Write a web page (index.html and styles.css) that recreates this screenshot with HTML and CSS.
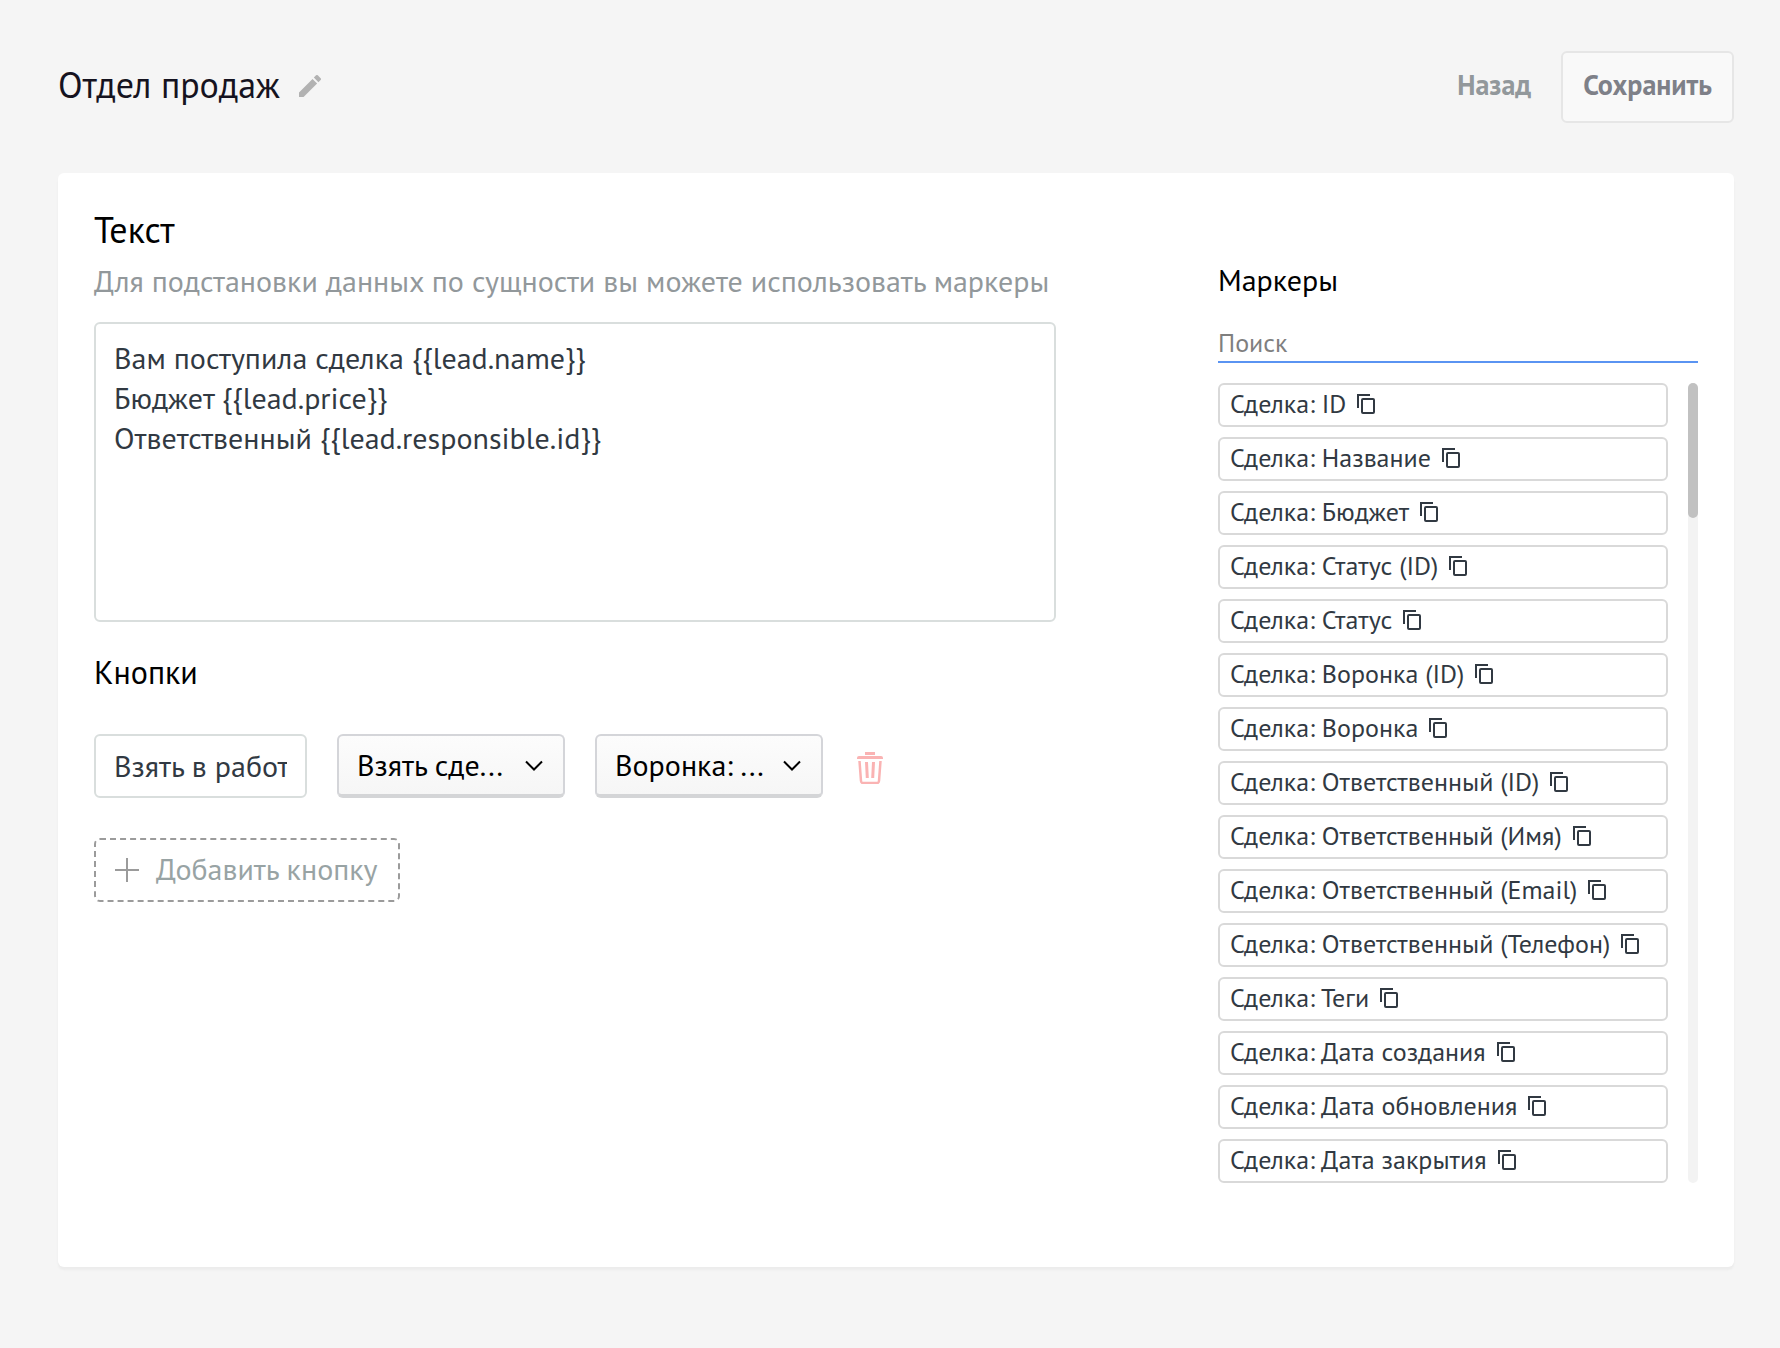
FILE: index.html
```html
<!DOCTYPE html>
<html lang="ru">
<head>
<meta charset="utf-8">
<meta name="viewport" content="width=device-width, initial-scale=1">
<title>Отдел продаж</title>
<link rel="stylesheet" href="styles.css">
</head>
<body>
<svg class="sprite" aria-hidden="true">
  <symbol id="icon-copy" viewBox="0 0 18 20">
    <path d="M1 14V1H13" fill="none" stroke="currentColor" stroke-width="2"/>
    <rect x="5" y="5" width="12" height="14" rx="1" fill="none" stroke="currentColor" stroke-width="2"/>
  </symbol>
  <symbol id="icon-chevron" viewBox="0 0 18 11">
    <path d="M1 1.5 9 9.500 17 1.500" fill="none" stroke="currentColor" stroke-width="2"/>
  </symbol>
</svg>

<header class="header">
  <h1 class="title">Отдел продаж</h1>
  <button class="icon-button" type="button" aria-label="Переименовать">
    <svg class="icon-pencil" viewBox="3 3 18 18"><path d="M3 17.250V21h3.750L17.810 9.940l-3.750-3.750L3 17.250zM20.710 7.040a1 1 0 0 0 0-1.410l-2.340-2.340a1 1 0 0 0-1.410 0l-1.830 1.830 3.750 3.750 1.830-1.830z" fill="currentColor"/></svg>
  </button>
  <div class="actions">
    <a class="back" href="#">Назад</a>
    <button class="save" type="button">Сохранить</button>
  </div>
</header>

<main class="card">
  <section class="editor">
    <h2 class="heading">Текст</h2>
    <label class="hint" for="message">Для подстановки данных по сущности вы можете использовать маркеры</label>
    <textarea class="message" id="message">Вам поступила сделка {{lead.name}}
Бюджет {{lead.price}}
Ответственный {{lead.responsible.id}}</textarea>

    <h3 class="subheading">Кнопки</h3>
    <div class="button-row">
      <input class="field" type="text" value="Взять в работу" aria-label="Название кнопки">
      <div class="select">
        <select class="select-control" aria-label="Действие"><option>Взять сде...</option></select>
        <svg class="icon-chevron"><use href="#icon-chevron"/></svg>
      </div>
      <div class="select">
        <select class="select-control" aria-label="Воронка"><option>Воронка: ...</option></select>
        <svg class="icon-chevron"><use href="#icon-chevron"/></svg>
      </div>
      <button class="icon-button delete" type="button" aria-label="Удалить кнопку">
        <svg class="icon-trash" viewBox="0 0 26 32" fill="none" stroke="currentColor">
          <path d="M8 1.500h10" stroke-width="3"/>
          <path d="M0 7V6q0-2 2-2h22q2 0 2 2v1z" fill="currentColor" stroke="none"/>
          <path d="M2.500 9l1.500 20q.2 2 2 2h14q1.800 0 2-2L23.500 9" stroke-width="2.500"/>
          <path d="M9.500 10l.8 16M16.500 10l-.8 16" stroke-width="3"/>
        </svg>
      </button>
    </div>
    <button class="add" type="button">
      <svg class="icon-plus" viewBox="0 0 24 24"><path d="M12 0v24M0 12h24" stroke="#9b9b9b" stroke-width="2"/></svg>
      <span class="add-label">Добавить кнопку</span>
    </button>
  </section>

  <aside class="markers">
    <h3 class="markers-title">Маркеры</h3>
    <input class="search" type="text" placeholder="Поиск" aria-label="Поиск">
    <div class="scroll-area">
      <ul class="marker-list">
        <li><button class="marker" type="button">Сделка: ID<svg class="icon-copy"><use href="#icon-copy"/></svg></button></li>
        <li><button class="marker" type="button">Сделка: Название<svg class="icon-copy"><use href="#icon-copy"/></svg></button></li>
        <li><button class="marker" type="button">Сделка: Бюджет<svg class="icon-copy"><use href="#icon-copy"/></svg></button></li>
        <li><button class="marker" type="button">Сделка: Статус (ID)<svg class="icon-copy"><use href="#icon-copy"/></svg></button></li>
        <li><button class="marker" type="button">Сделка: Статус<svg class="icon-copy"><use href="#icon-copy"/></svg></button></li>
        <li><button class="marker" type="button">Сделка: Воронка (ID)<svg class="icon-copy"><use href="#icon-copy"/></svg></button></li>
        <li><button class="marker" type="button">Сделка: Воронка<svg class="icon-copy"><use href="#icon-copy"/></svg></button></li>
        <li><button class="marker" type="button">Сделка: Ответственный (ID)<svg class="icon-copy"><use href="#icon-copy"/></svg></button></li>
        <li><button class="marker" type="button">Сделка: Ответственный (Имя)<svg class="icon-copy"><use href="#icon-copy"/></svg></button></li>
        <li><button class="marker" type="button">Сделка: Ответственный (Email)<svg class="icon-copy"><use href="#icon-copy"/></svg></button></li>
        <li><button class="marker" type="button">Сделка: Ответственный (Телефон)<svg class="icon-copy"><use href="#icon-copy"/></svg></button></li>
        <li><button class="marker" type="button">Сделка: Теги<svg class="icon-copy"><use href="#icon-copy"/></svg></button></li>
        <li><button class="marker" type="button">Сделка: Дата создания<svg class="icon-copy"><use href="#icon-copy"/></svg></button></li>
        <li><button class="marker" type="button">Сделка: Дата обновления<svg class="icon-copy"><use href="#icon-copy"/></svg></button></li>
        <li><button class="marker" type="button">Сделка: Дата закрытия<svg class="icon-copy"><use href="#icon-copy"/></svg></button></li>
      </ul>
      <div class="scrollbar"><div class="scroll-thumb"></div></div>
    </div>
  </aside>
</main>
</body>
</html>
```
FILE: styles.css
```css
* {
  box-sizing: border-box;
}

body {
  margin: 0;
  padding: 51px 46px 80px 58px;
  background: #f5f5f5;
  color: #000;
  font: 30px/40px "PT Sans", "Noto Sans", sans-serif;
}

button, input, select, textarea {
  margin: 0;
  font: inherit;
  outline: none;
}

h1, h2, h3 {
  margin: 0;
  font-weight: 400;
}

.sprite {
  display: none;
}

.icon-button {
  display: flex;
  padding: 0;
  border: 0;
  background: none;
  cursor: pointer;
}

/* Header */

.header {
  display: flex;
  align-items: center;
  margin-bottom: 50px;
}

.title {
  padding-bottom: 4px;
  color: #151320;
  font-size: 36px;
  line-height: 48px;
}

.header .icon-button {
  margin-left: 19px;
  padding-bottom: 2px;
  color: #b2b2b2;
}

.icon-pencil {
  width: 22px;
  height: 22px;
}

.actions {
  display: flex;
  align-items: center;
  gap: 30px;
  margin-left: auto;
  font-size: 28px;
  font-weight: 700;
}

.back {
  padding-bottom: 4px;
  color: #92989b;
  text-decoration: none;
}

.save {
  height: 72px;
  padding: 0 20px 4px;
  border: 2px solid #e6e6e6;
  border-radius: 6px;
  background: #f9f9f9;
  color: #7e8088;
}

/* Card */

.card {
  display: grid;
  grid-template-columns: 60% 480px;
  justify-content: space-between;
  padding: 33px 36px 84px;
  border-radius: 6px;
  background: #fff;
  box-shadow: 0 3px 2px #ececec;
}

.editor {
  display: flex;
  flex-direction: column;
  align-items: flex-start;
}

.heading {
  margin-bottom: 7px;
  font-size: 36px;
  line-height: 48px;
}

.hint {
  margin-bottom: 21px;
  color: #92989b;
}

.message {
  display: block;
  width: 100%;
  height: 300px;
  margin-bottom: 30px;
  padding: 14px 18px;
  border: 2px solid #d9dedd;
  border-radius: 6px;
  color: #313942;
  resize: none;
}

.subheading {
  margin-bottom: 42px;
  font-size: 32px;
}

.button-row {
  display: flex;
  align-items: center;
  gap: 30px;
  margin-bottom: 40px;
}

.field {
  width: 213px;
  height: 64px;
  padding: 0 18px 2px;
  border: 2px solid #d9dedd;
  border-radius: 6px;
  color: #313942;
}

.select {
  display: grid;
  align-items: center;
  width: 228px;
}

.select > * {
  grid-area: 1 / 1;
}

.select-control {
  width: 100%;
  height: 64px;
  padding: 0 18px;
  border: 2px solid #d4d5d9;
  border-bottom: 4px solid #d4d5d7;
  border-radius: 6px;
  background: linear-gradient(#fcfcfc, #f6f6f6);
  color: #000;
  appearance: none;
}

.icon-chevron {
  justify-self: end;
  width: 18px;
  height: 11px;
  margin: 0 22px 2px 0;
  pointer-events: none;
}

.delete {
  padding: 8px 4px 4px;
  color: #fab3b3;
}

.icon-trash {
  width: 26px;
  height: 32px;
}

.add {
  display: flex;
  align-items: center;
  gap: 17px;
  height: 64px;
  padding: 0 20px 0 19px;
  border: 2px dashed #9b9b9b;
  border-radius: 6px;
  background: none;
  color: #98a3a4;
}

.add-label {
  padding-bottom: 2px;
}

.icon-plus {
  width: 24px;
  height: 24px;
}

/* Markers */

.markers {
  padding-top: 54px;
}

.markers-title {
  margin-bottom: 21px;
  font-size: 30px;
}

.search {
  display: block;
  width: 100%;
  height: 42px;
  margin-bottom: 20px;
  padding: 2px 0 0;
  border: 0;
  border-bottom: 2px solid #5a94f2;
  background: none;
  font-size: 26px;
}

.search::placeholder {
  color: #7f7f7f;
}

.scroll-area {
  display: flex;
  gap: 20px;
}

.marker-list {
  display: grid;
  flex: 1;
  gap: 10px;
  margin: 0;
  padding: 0;
  list-style: none;
}

.marker {
  display: flex;
  align-items: center;
  gap: 11px;
  width: 100%;
  height: 44px;
  padding: 0 10px 2px;
  border: 2px solid #d9d9d9;
  border-radius: 6px;
  background: #fff;
  color: #313942;
  font-size: 26px;
  line-height: 36px;
}

.icon-copy {
  width: 18px;
  height: 20px;
}

.scrollbar {
  width: 10px;
  border-radius: 5px;
  background: #f3f3f3;
}

.scroll-thumb {
  height: 135px;
  border-radius: 5px;
  background: #c1c1c1;
}
```
